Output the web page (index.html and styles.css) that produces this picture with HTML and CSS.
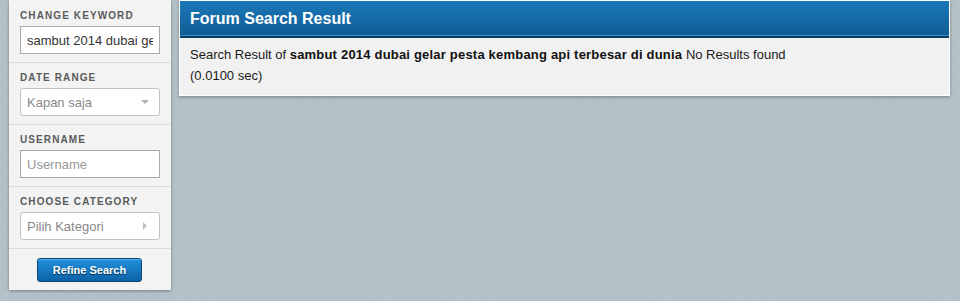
FILE: index.html
```html
<!DOCTYPE html>
<html>
<head>
<meta charset="utf-8">
<title>Forum Search Result</title>
<link rel="stylesheet" href="styles.css">
</head>
<body>
<div class="page">
  <aside class="sidebar">
    <div class="section">
      <div class="label">CHANGE KEYWORD</div>
      <input class="field" type="text" value="sambut 2014 dubai gelar pesta kembang api terbesar di dunia">
    </div>
    <div class="section">
      <div class="label">DATE RANGE</div>
      <div class="select">
        <span>Kapan saja</span>
        <svg class="caret" width="8" height="4" viewBox="0 0 8 4"><path d="M0 0H8L4 4Z" fill="#b0b0b0"/></svg>
      </div>
    </div>
    <div class="section">
      <div class="label">USERNAME</div>
      <input class="field" type="text" placeholder="Username">
    </div>
    <div class="section">
      <div class="label">CHOOSE CATEGORY</div>
      <div class="select">
        <span>Pilih Kategori</span>
        <svg class="caret right" width="4" height="8" viewBox="0 0 4 8"><path d="M0 0V8L4 4Z" fill="#c0c0c0"/></svg>
      </div>
    </div>
    <div class="actions">
      <button class="btn">Refine Search</button>
    </div>
  </aside>
  <main class="panel">
    <div class="panel-head">Forum Search Result</div>
    <div class="panel-body">
      Search Result of <b>sambut 2014 dubai gelar pesta kembang api terbesar di dunia</b> No Results found<br>
      (0.0100 sec)
    </div>
  </main>
</div>
</body>
</html>
```
FILE: styles.css
```css
html, body {
  margin: 0;
  padding: 0;
}
body {
  background-color: #b4c1c9;
  background-image: repeating-linear-gradient(-45deg, #b7c4cc 0, #b7c4cc 1px, #b2bfc7 1px, #b2bfc7 3px);
  font-family: "Liberation Sans", Arial, sans-serif;
  height: 301px;
  overflow: hidden;
}
.page {
  display: flex;
  align-items: flex-start;
  padding: 0 10px 0 9px;
  gap: 8px;
}
.sidebar {
  width: 162px;
  flex: none;
  background: #f3f3f3;
  box-shadow: 0 1px 3px rgba(0, 0, 0, 0.35);
  padding-top: 1px;
}
.section {
  padding: 8px 11px 8px;
  border-bottom: 1px solid #dcdcdc;
}
.label {
  font-size: 10px;
  font-weight: bold;
  letter-spacing: 1.1px;
  line-height: 14px;
  color: #5a5a5a;
  margin-bottom: 3px;
}
.field {
  display: block;
  box-sizing: border-box;
  width: 140px;
  height: 28px;
  margin: 0;
  padding: 0 6px;
  border: 1px solid #a9a9a9;
  background: #fff;
  font-family: "Liberation Sans", Arial, sans-serif;
  font-size: 13px;
  color: #333;
  outline: none;
}
.field::placeholder {
  color: #9a9a9a;
}
.select {
  box-sizing: border-box;
  width: 140px;
  height: 28px;
  border: 1px solid #c4c4c4;
  border-radius: 3px;
  background: #fff;
  display: flex;
  align-items: center;
  justify-content: space-between;
  padding: 0 10px 0 6px;
  font-size: 13px;
  color: #888;
}
.caret.right {
  margin-right: 2px;
}
.actions {
  padding: 9px 0 8px;
  display: flex;
  justify-content: center;
}
.btn {
  box-sizing: border-box;
  width: 105px;
  height: 24px;
  margin-left: -1px;
  border: 1px solid #0b4676;
  border-radius: 3px;
  background: linear-gradient(#2190dc, #0c62a6);
  box-shadow: inset 0 1px 0 rgba(255, 255, 255, 0.25);
  color: #fff;
  font-family: "Liberation Sans", Arial, sans-serif;
  font-size: 11px;
  font-weight: bold;
  text-shadow: 0 1px 1px rgba(0, 0, 0, 0.6);
  padding: 0;
}
.panel {
  flex: 1;
  background: #f1f1f1;
  border: 1px solid #fff;
  border-top: 0;
  box-shadow: 0 1px 3px rgba(0, 0, 0, 0.35);
}
.panel-head {
  height: 35px;
  line-height: 35px;
  padding: 0 10px;
  background: linear-gradient(#1b77b8, #105d96);
  border-top: 1px solid #fff;
  border-bottom: 2px solid #0c3a5c;
  box-shadow: inset 0 -1px 0 #3a8fcb;
  color: #fff;
  font-size: 16px;
  font-weight: bold;
}
.panel-body {
  padding: 6px 10px 9px;
  font-size: 13px;
  line-height: 21px;
  color: #1a1a1a;
}
.panel-body b {
  color: #111;
  letter-spacing: 0.2px;
}
```
